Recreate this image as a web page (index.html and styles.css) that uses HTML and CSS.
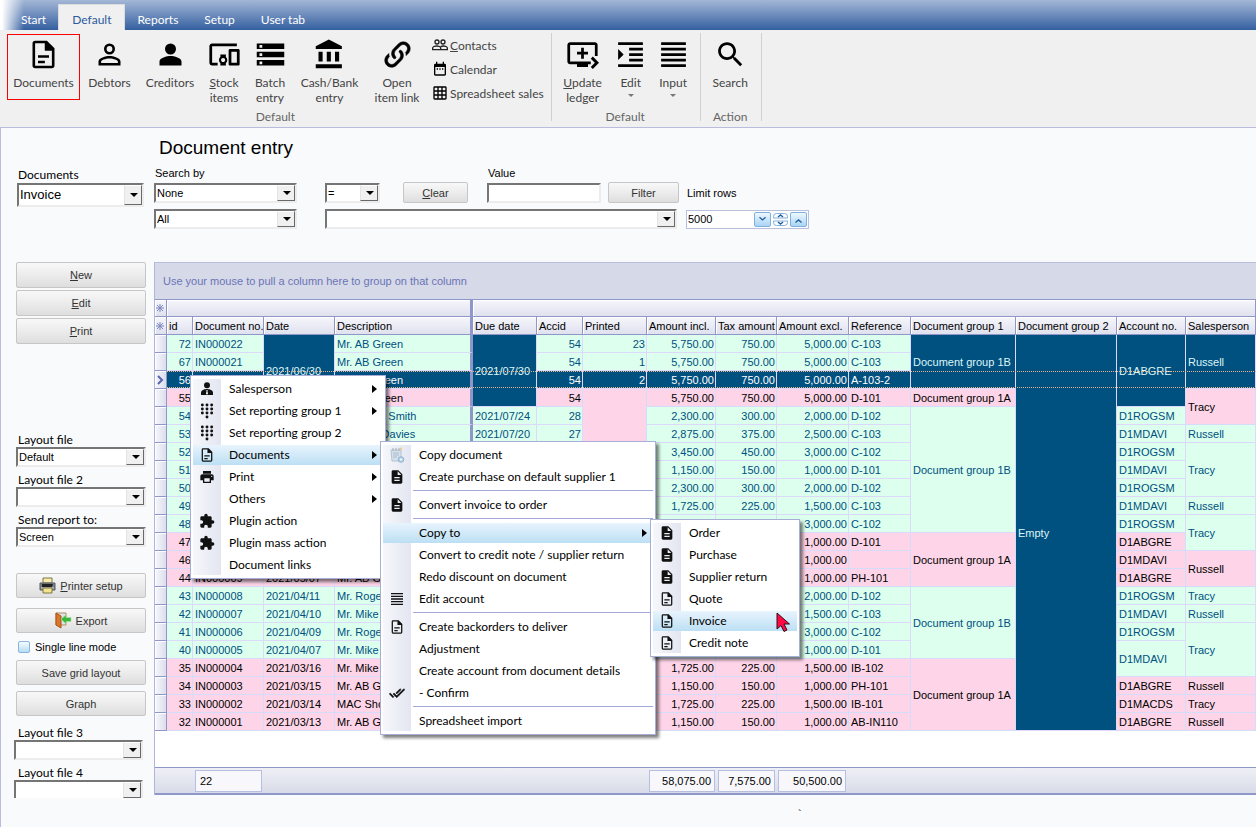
FILE: index.html
```html
<!DOCTYPE html>
<html lang="en">
<head>
<meta charset="utf-8">
<title>Document entry</title>
<link rel="stylesheet" href="styles.css">
</head>
<body>
<svg class="sprite" aria-hidden="true">
  <symbol id="doc" viewBox="0 0 24 24"><path fill-rule="evenodd" d="M14.500 2H6a2 2 0 0 0-2 2v16a2 2 0 0 0 2 2h12a2 2 0 0 0 2-2V7.500zM5.900 20.100V3.900H13V9h5.100v11.100zM8 12.500h8v1.800H8zM8 16.500h5v1.800H8z"/><path d="M13 2.500V9h6z"/></symbol>
  <symbol id="docfill" viewBox="0 0 24 24"><path fill-rule="evenodd" d="M14 2H6c-1.100 0-2 .9-2 2v16c0 1.100.9 2 2 2h12c1.100 0 2-.9 2-2V8zm2 16H8v-2h8zm0-4H8v-2h8zm-3-5V3.500L18.500 9z"/></symbol>
  <symbol id="person-o" viewBox="0 0 24 24"><path fill-rule="evenodd" d="M12 4a4 4 0 1 0 0 8 4 4 0 0 0 0-8zm0 1.900a2.100 2.100 0 1 1 0 4.200 2.100 2.100 0 0 1 0-4.200zM12 13c-2.670 0-8 1.340-8 4v3h16v-3c0-2.660-5.330-4-8-4zm0 1.900c2.970 0 6.100 1.460 6.100 2.100v1.100H5.900V17c0-.640 3.130-2.100 6.100-2.100z"/></symbol>
  <symbol id="person" viewBox="0 0 24 24"><path d="M12 12a4 4 0 1 0 0-8 4 4 0 0 0 0 8zm0 1c-2.670 0-8 1.340-8 4v3h16v-3c0-2.660-5.330-4-8-4z"/></symbol>
  <symbol id="devices" viewBox="0 0 24 24"><path d="M3 6h18V4H3c-1.100 0-2 .9-2 2v12c0 1.100.9 2 2 2h4v-2H3V6zm10 6H9v1.780c-.61.55-1 1.330-1 2.220s.39 1.670 1 2.220V20h4v-1.780c.61-.55 1-1.340 1-2.220s-.39-1.670-1-2.220V12zm-2 5.500c-.83 0-1.500-.67-1.500-1.500s.67-1.500 1.500-1.500 1.500.67 1.500 1.500-.67 1.500-1.500 1.500zM22 8h-6c-.5 0-1 .5-1 1v10c0 .5.5 1 1 1h6c.5 0 1-.5 1-1V9c0-.5-.5-1-1-1zm-1 10h-4v-8h4v8z"/></symbol>
  <symbol id="storage" viewBox="0 0 24 24"><path d="M2 20h20v-4H2v4zm2-3h2v2H4v-2zM2 4v4h20V4H2zm4 3H4V5h2v2zm-4 7h20v-4H2v4zm2-3h2v2H4v-2z"/></symbol>
  <symbol id="bank" viewBox="0 0 24 24"><path d="M4 10v7h3v-7H4zm6 0v7h3v-7h-3zM2 22h19v-3H2v3zm14-12v7h3v-7h-3zm-4.500-9L2 6v2h19V6l-9.500-5z"/></symbol>
  <symbol id="link" viewBox="0 0 24 24"><path d="M10.590 13.410C11 13.800 11 14.440 10.590 14.830 10.200 15.220 9.560 15.220 9.170 14.830 7.220 12.880 7.220 9.710 9.170 7.760L12.710 4.220C14.660 2.270 17.830 2.270 19.780 4.220 21.730 6.170 21.730 9.340 19.780 11.290L18.290 12.780C18.300 11.960 18.170 11.140 17.890 10.360L18.360 9.880C19.540 8.710 19.540 6.810 18.360 5.640 17.190 4.460 15.290 4.460 14.120 5.640L10.590 9.170C9.410 10.340 9.410 12.240 10.590 13.410M13.410 9.170C13.800 8.780 14.440 8.780 14.830 9.170 16.780 11.120 16.780 14.290 14.830 16.240L11.290 19.780C9.340 21.730 6.170 21.730 4.220 19.780 2.270 17.830 2.270 14.660 4.220 12.710L5.710 11.220C5.700 12.040 5.830 12.860 6.110 13.650L5.640 14.120C4.460 15.290 4.460 17.190 5.640 18.360 6.810 19.540 8.710 19.540 9.880 18.360L13.410 14.830C14.590 13.660 14.590 11.760 13.410 10.590 13 10.200 13 9.560 13.410 9.170Z" stroke="#000" stroke-width=".4"/></symbol>
  <symbol id="people" viewBox="0 0 24 24"><g fill="none" stroke="#222" stroke-width="2"><circle cx="7.500" cy="7.500" r="3"/><circle cx="16.500" cy="7.500" r="3"/><path d="M1 19v-2.500c0-1.500 3-3 6-3s6 1.500 6 3V19zM13 19h10v-2.500c0-1.500-3-3-6-3-1.500 0-3 .4-4 1"/></g></symbol>
  <symbol id="calendar" viewBox="0 0 24 24"><path fill-rule="evenodd" d="M19 4h-1V1h-2v3H8V1H6v3H5a2 2 0 0 0-2 2v14a2 2 0 0 0 2 2h14a2 2 0 0 0 2-2V6a2 2 0 0 0-2-2zm0 16H5V9h14zM7 11h2v2H7zm4 0h2v2h-2zm4 0h2v2h-2z"/></symbol>
  <symbol id="grid" viewBox="0 0 24 24"><path d="M20 2H4c-1.100 0-2 .9-2 2v16c0 1.100.9 2 2 2h16c1.100 0 2-.9 2-2V4c0-1.100-.9-2-2-2zM8 20H4v-4h4v4zm0-6H4v-4h4v4zm0-6H4V4h4v4zm6 12h-4v-4h4v4zm0-6h-4v-4h4v4zm0-6h-4V4h4v4zm6 12h-4v-4h4v4zm0-6h-4v-4h4v4zm0-6h-4V4h4v4z"/></symbol>
  <symbol id="ledger" viewBox="0 0 24 24"><path d="M21 3H3c-1.110 0-2 .89-2 2v12c0 1.100.89 2 2 2h5v2h8v-2h2v-2H3V5h18v8h2V5c0-1.110-.9-2-2-2zm-8 7V7h-2v3H8v2h3v3h2v-3h3v-2h-3zm11 8l-4.500 4.500L18 21l3-3-3-3 1.500-1.500L24 18z"/></symbol>
  <symbol id="indent" viewBox="0 0 24 24"><path d="M3 21h18v-2H3v2zM3 8v8l4-4-4-4zm8 9h10v-2H11v2zM3 3v2h18V3H3zm8 6h10V7H11v2zm0 4h10v-2H11v2z"/></symbol>
  <symbol id="lines" viewBox="0 0 24 24"><path d="M3 21h18v-2H3v2zm0-4h18v-2H3v2zm0-4h18v-2H3v2zm0-4h18V7H3v2zm0-6v2h18V3H3z"/></symbol>
  <symbol id="search" viewBox="0 0 24 24"><path d="M15.500 14h-.79l-.28-.27C15.410 12.590 16 11.110 16 9.500 16 5.910 13.090 3 9.500 3S3 5.910 3 9.500 5.910 16 9.500 16c1.610 0 3.090-.59 4.230-1.570l.27.28v.79l5 4.990L20.490 19l-4.990-5zm-6 0C7.010 14 5 11.990 5 9.500S7.010 5 9.500 5 14 7.010 14 9.500 11.990 14 9.500 14z"/></symbol>
  <symbol id="tie" viewBox="0 0 24 24"><circle cx="12" cy="6.500" r="4.500"/><path fill-rule="evenodd" d="M12 12c-2 0-9 1-9 5.500V21h18v-3.500C21 13 14 12 12 12zm-1.300 1.500h2.600l-.7 1.500 1 4-1.600 1.500-1.600-1.500 1-4z"/></symbol>
  <symbol id="dial" viewBox="0 0 24 24"><circle cx="5" cy="3" r="2.200"/><circle cx="12" cy="3" r="2.200"/><circle cx="19" cy="3" r="2.200"/><circle cx="5" cy="9" r="2.200"/><circle cx="12" cy="9" r="2.200"/><circle cx="19" cy="9" r="2.200"/><circle cx="5" cy="15" r="2.200"/><circle cx="12" cy="15" r="2.200"/><circle cx="19" cy="15" r="2.200"/><circle cx="12" cy="21" r="2.200"/></symbol>
  <symbol id="print" viewBox="0 0 24 24"><path d="M19 8H5c-1.660 0-3 1.340-3 3v6h4v4h12v-4h4v-6c0-1.660-1.340-3-3-3zm-3 11H8v-5h8v5zm3-7c-.55 0-1-.45-1-1s.45-1 1-1 1 .45 1 1-.45 1-1 1zm-1-9H6v4h12V3z"/></symbol>
  <symbol id="puzzle" viewBox="0 0 24 24"><path d="M20.500 11H19V7c0-1.100-.9-2-2-2h-4V3.500C13 2.120 11.880 1 10.500 1S8 2.120 8 3.500V5H4c-1.100 0-1.990.9-1.990 2v3.800H3.500c1.490 0 2.700 1.210 2.700 2.700s-1.210 2.700-2.700 2.700H2V20c0 1.100.9 2 2 2h3.800v-1.500c0-1.490 1.210-2.700 2.700-2.700 1.490 0 2.700 1.210 2.700 2.700V22H17c1.100 0 2-.9 2-2v-4h1.500c1.380 0 2.500-1.120 2.500-2.500S21.880 11 20.500 11z"/></symbol>
  <symbol id="doneall" viewBox="0 0 24 24"><path d="M18 7l-1.410-1.410-6.340 6.340 1.410 1.410L18 7zm4.240-1.410L11.660 16.170 7.480 12l-1.410 1.410L11.660 19l12-12-1.420-1.410zM.41 13.410L6 19l1.410-1.410L1.830 12 .41 13.410z" stroke="#000" stroke-width=".8"/></symbol>
  <symbol id="copydoc" viewBox="0 0 16 16"><path d="M2 3h10v11H3z" fill="#d5e2ec" stroke="#b3c3d0"/><path d="M4 1v3M7 1v3M10 1v3" stroke="#a3afbb"/><path d="M4 6h6M4 8h6M4 10h4" stroke="#a9bccb"/><path d="M10 1l3-.5v3z" fill="#eec98c"/><circle cx="12" cy="12.500" r="2.800" fill="#b4cfe8" stroke="#94b3d2"/><circle cx="12" cy="12.500" r="1" fill="#fff"/></symbol>
</svg>

<nav class="tabs">
  <a href="#start">Start</a><a href="#default" class="on">Default</a><a href="#reports">Reports</a><a href="#setup">Setup</a><a href="#user">User tab</a>
</nav>

<div class="ribbon">
  <section class="group wide">
    <div class="tools">
      <button class="tool on w73"><svg><use href="#doc"/></svg>Documents</button>
      <button class="tool w59"><svg><use href="#person-o"/></svg>Debtors</button>
      <button class="tool w62"><svg><use href="#person"/></svg>Creditors</button>
      <button class="tool w46"><svg><use href="#devices"/></svg><span><u>S</u>tock<br>items</span></button>
      <button class="tool w46"><svg><use href="#storage"/></svg>Batch<br>entry</button>
      <button class="tool w73"><svg><use href="#bank"/></svg>Cash/Bank<br>entry</button>
      <button class="tool w62"><svg><use href="#link"/></svg>Open<br>item link</button>
      <div class="minis">
        <button class="mini"><svg><use href="#people"/></svg><span><u>C</u>ontacts</span></button>
        <button class="mini"><svg><use href="#calendar"/></svg>Calendar</button>
        <button class="mini"><svg><use href="#grid"/></svg>Spreadsheet sales</button>
      </div>
    </div>
    <h2>Default</h2>
  </section>
  <section class="group">
    <div class="tools">
      <button class="tool w62"><svg><use href="#ledger"/></svg><span><u>U</u>pdate<br>ledger</span></button>
      <button class="tool w34"><svg><use href="#indent"/></svg>Edit<i class="drop"></i></button>
      <button class="tool w51"><svg><use href="#lines"/></svg>Input<i class="drop"></i></button>
    </div>
    <h2>Default</h2>
  </section>
  <section class="group">
    <div class="tools"><button class="tool w59"><svg><use href="#search"/></svg>Search</button></div>
    <h2>Action</h2>
  </section>
</div>

<div class="work">
  <aside class="side">
    <div class="field top"><label for="f-doc">Documents</label><span class="combo big"><select id="f-doc"><option>Invoice</option></select></span></div>
    <div class="stack">
      <button class="btn"><span><u>N</u>ew</span></button>
      <button class="btn"><span><u>E</u>dit</span></button>
      <button class="btn"><span><u>P</u>rint</span></button>
    </div>
    <div class="fields">
      <div class="field"><label for="f-l1">Layout file</label><span class="combo"><select id="f-l1"><option>Default</option></select></span></div>
      <div class="field"><label for="f-l2">Layout file 2</label><span class="combo"><select id="f-l2"><option></option></select></span></div>
      <div class="field"><label for="f-send">Send report to:</label><span class="combo"><select id="f-send"><option>Screen</option></select></span></div>
    </div>
    <div class="actions">
      <button class="btn"><svg class="pic" viewBox="0 0 17 17"><path d="M4 1h9v5H4z" fill="#f6ecae" stroke="#7d7646"/><path d="M1 6h15v7H1z" fill="#7d828a" stroke="#565a61"/><path d="M3 7h11l-1 3H3z" fill="#222"/><path d="M2 11h13" stroke="#d5d8dc"/><path d="M4 11h9v5H4z" fill="#f3e48e" stroke="#7d7646"/></svg><span><u>P</u>rinter setup</span></button>
      <button class="btn"><svg class="pic" viewBox="0 0 17 17"><path d="M1 1h10v12H1z" fill="#dfe3e8" stroke="#b48a5c"/><path d="M1 1l5 3v12l-5-3z" fill="#d9772b" stroke="#a65516"/><path d="M6 7l5-4v2.500h5v4h-5V12z" fill="#39b83b" stroke="#a5e29d" stroke-width=".6"/></svg>Export</button>
      <label class="check"><input type="checkbox">Single line mode</label>
      <button class="btn">Save grid layout</button>
      <button class="btn">Graph</button>
    </div>
    <div class="fields late">
      <div class="field"><label for="f-l3">Layout file 3</label><span class="combo"><select id="f-l3"><option></option></select></span></div>
      <div class="field cut"><label for="f-l4">Layout file 4</label><span class="combo"><select id="f-l4"><option></option></select></span></div>
    </div>
  </aside>

  <main class="main">
    <h1>Document entry</h1>
    <form class="filter">
      <label for="f-by" class="c1">Search by</label>
      <label for="f-val" class="c4">Value</label>
      <span class="combo w143 c1 r2"><select id="f-by"><option>None</option></select></span>
      <span class="combo w55 c2 r2"><select id="f-op" aria-label="Operator"><option>=</option></select></span>
      <button type="button" class="btn w65 c3 r2"><span><u>C</u>lear</span></button>
      <input id="f-val" class="box w114 c4 r2" type="text">
      <button type="button" class="btn w71 c5 r2">Filter</button>
      <label for="f-rows" class="c6 r2">Limit rows</label>
      <span class="combo w143 c1 r3"><select id="f-all" aria-label="Scope"><option>All</option></select></span>
      <span class="combo w352 r3 cw"><select id="f-expr" aria-label="Saved filter"><option></option></select></span>
      <span class="spin c6 r3">
        <input id="f-rows" type="text" value="5000">
        <button type="button" aria-label="Less"><svg viewBox="0 0 17 15"><path d="M5 5l3.500 3L12 5"/></svg></button>
        <button type="button" class="pair" aria-label="Step"><svg viewBox="0 0 17 15"><path d="M1.500 6V4.500q0-3 3-3h8q3 0 3 3V6zM1.500 9v1.500q0 3 3 3h8q3 0 3-3V9z" class="ring"/><path d="M6 5l2.500-2L11 5M6 10l2.500 2 2.500-2"/></svg></button>
        <button type="button" aria-label="More"><svg viewBox="0 0 17 15"><path d="M5 11l3.500-3 3.500 3"/></svg></button>
      </span>
    </form>

    <div class="panel">
      <div class="groupbar">Use your mouse to pull a column here to group on that column</div>
      <table>
        <colgroup><col class="k12"><col class="k26"><col class="k71"><col class="k71"><col class="k138"><col class="k64"><col class="k46"><col class="k64"><col class="k69"><col class="k61"><col class="k72"><col class="k62"><col class="k105"><col class="k101"><col class="k69"><col></colgroup>
        <thead>
          <tr><th class="ind"><svg viewBox="0 0 10 10"><path d="M5 1v8M1 5h8M2 2l6 6M8 2l-6 6"/></svg></th><th colspan="4" class="split"></th><th colspan="11"></th></tr>
          <tr><th class="ind"><svg viewBox="0 0 10 10"><path d="M5 1v8M1 5h8M2 2l6 6M8 2l-6 6"/></svg></th><th>id</th><th>Document no.</th><th>Date</th><th class="split">Description</th><th>Due date</th><th>Accid</th><th>Printed</th><th>Amount incl.</th><th>Tax amount</th><th>Amount excl.</th><th>Reference</th><th>Document group 1</th><th>Document group 2</th><th>Account no.</th><th>Salesperson</th></tr>
        </thead>
        <tbody>
          <tr class="g"><td class="ind"></td><td class="n">72</td><td>IN000022</td><td rowspan="4" class="d">2021/06/30</td><td class="split">Mr. AB Green</td><td rowspan="4" class="d">2021/07/30</td><td class="n">54</td><td class="n">23</td><td class="n">5,750.00</td><td class="n">750.00</td><td class="n">5,000.00</td><td>C-103</td><td rowspan="3" class="d">Document group 1B</td><td rowspan="22" class="d">Empty</td><td rowspan="4" class="d">D1ABGRE</td><td rowspan="3" class="d">Russell</td></tr>
          <tr class="g"><td class="ind"></td><td class="n">67</td><td>IN000021</td><td class="split">Mr. AB Green</td><td class="n">54</td><td class="n">1</td><td class="n">5,750.00</td><td class="n">750.00</td><td class="n">5,000.00</td><td>C-103</td></tr>
          <tr class="d focus"><td class="ind"><svg viewBox="0 0 10 16"><path d="M3 4l4 4-4 4"/></svg></td><td class="n">56</td><td></td><td class="split">Mr. AB Green</td><td class="n">54</td><td class="n">2</td><td class="n">5,750.00</td><td class="n">750.00</td><td class="n">5,000.00</td><td>A-103-2</td></tr>
          <tr class="p"><td class="ind"></td><td class="n">55</td><td></td><td class="split">Mr. AB Green</td><td class="n">54</td><td rowspan="19"></td><td class="n">5,750.00</td><td class="n">750.00</td><td class="n">5,000.00</td><td>D-101</td><td>Document group 1A</td><td rowspan="2">Tracy</td></tr>
          <tr class="g"><td class="ind"></td><td class="n">54</td><td></td><td></td><td class="split">Mr. Roger Smith</td><td>2021/07/24</td><td class="n">28</td><td class="n">2,300.00</td><td class="n">300.00</td><td class="n">2,000.00</td><td>D-102</td><td rowspan="7">Document group 1B</td><td>D1ROGSM</td></tr>
          <tr class="g"><td class="ind"></td><td class="n">53</td><td></td><td></td><td class="split">Mr. Mike Davies</td><td>2021/07/20</td><td class="n">27</td><td class="n">2,875.00</td><td class="n">375.00</td><td class="n">2,500.00</td><td>C-103</td><td>D1MDAVI</td><td>Russell</td></tr>
          <tr class="g"><td class="ind"></td><td class="n">52</td><td></td><td></td><td class="split"></td><td></td><td></td><td class="n">3,450.00</td><td class="n">450.00</td><td class="n">3,000.00</td><td>C-102</td><td>D1ROGSM</td><td rowspan="3">Tracy</td></tr>
          <tr class="g"><td class="ind"></td><td class="n">51</td><td></td><td></td><td class="split"></td><td></td><td></td><td class="n">1,150.00</td><td class="n">150.00</td><td class="n">1,000.00</td><td>D-101</td><td>D1MDAVI</td></tr>
          <tr class="g"><td class="ind"></td><td class="n">50</td><td></td><td></td><td class="split"></td><td></td><td></td><td class="n">2,300.00</td><td class="n">300.00</td><td class="n">2,000.00</td><td>D-102</td><td>D1ROGSM</td></tr>
          <tr class="g"><td class="ind"></td><td class="n">49</td><td></td><td></td><td class="split"></td><td></td><td></td><td class="n">1,725.00</td><td class="n">225.00</td><td class="n">1,500.00</td><td>C-103</td><td>D1MDAVI</td><td>Russell</td></tr>
          <tr class="g"><td class="ind"></td><td class="n">48</td><td></td><td></td><td class="split"></td><td></td><td></td><td></td><td></td><td class="n">3,000.00</td><td>C-102</td><td>D1ROGSM</td><td rowspan="2">Tracy</td></tr>
          <tr class="p"><td class="ind"></td><td class="n">47</td><td></td><td></td><td class="split"></td><td></td><td></td><td></td><td></td><td class="n">1,000.00</td><td>D-101</td><td rowspan="3">Document group 1A</td><td>D1ABGRE</td></tr>
          <tr class="p"><td class="ind"></td><td class="n">46</td><td></td><td></td><td class="split"></td><td></td><td></td><td></td><td></td><td class="n">1,000.00</td><td></td><td>D1MDAVI</td><td rowspan="2">Russell</td></tr>
          <tr class="p"><td class="ind"></td><td class="n">44</td><td>IN000009</td><td>2021/05/07</td><td class="split">Mr. AB Green</td><td></td><td></td><td></td><td></td><td class="n">1,000.00</td><td>PH-101</td><td>D1ABGRE</td></tr>
          <tr class="g"><td class="ind"></td><td class="n">43</td><td>IN000008</td><td>2021/04/11</td><td class="split">Mr. Roger Smith</td><td></td><td></td><td></td><td></td><td class="n">2,000.00</td><td>D-102</td><td rowspan="4">Document group 1B</td><td>D1ROGSM</td><td>Tracy</td></tr>
          <tr class="g"><td class="ind"></td><td class="n">42</td><td>IN000007</td><td>2021/04/10</td><td class="split">Mr. Mike Davies</td><td></td><td></td><td></td><td></td><td class="n">1,500.00</td><td>C-103</td><td>D1MDAVI</td><td>Russell</td></tr>
          <tr class="g"><td class="ind"></td><td class="n">41</td><td>IN000006</td><td>2021/04/09</td><td class="split">Mr. Roger Smith</td><td></td><td></td><td></td><td></td><td class="n">3,000.00</td><td>C-102</td><td>D1ROGSM</td><td rowspan="3">Tracy</td></tr>
          <tr class="g"><td class="ind"></td><td class="n">40</td><td>IN000005</td><td>2021/04/07</td><td class="split">Mr. Mike Davies</td><td></td><td></td><td></td><td></td><td class="n">1,000.00</td><td>D-101</td><td rowspan="2">D1MDAVI</td></tr>
          <tr class="p"><td class="ind"></td><td class="n">35</td><td>IN000004</td><td>2021/03/16</td><td class="split">Mr. Mike Davies</td><td></td><td></td><td class="n">1,725.00</td><td class="n">225.00</td><td class="n">1,500.00</td><td>IB-102</td><td rowspan="4">Document group 1A</td></tr>
          <tr class="p"><td class="ind"></td><td class="n">34</td><td>IN000003</td><td>2021/03/15</td><td class="split">Mr. AB Green</td><td></td><td></td><td class="n">1,150.00</td><td class="n">150.00</td><td class="n">1,000.00</td><td>PH-101</td><td>D1ABGRE</td><td>Russell</td></tr>
          <tr class="p"><td class="ind"></td><td class="n">33</td><td>IN000002</td><td>2021/03/14</td><td class="split">MAC Shop</td><td></td><td></td><td class="n">1,725.00</td><td class="n">225.00</td><td class="n">1,500.00</td><td>IB-101</td><td>D1MACDS</td><td>Tracy</td></tr>
          <tr class="p"><td class="ind"></td><td class="n">32</td><td>IN000001</td><td>2021/03/13</td><td class="split">Mr. AB Green</td><td></td><td></td><td class="n">1,150.00</td><td class="n">150.00</td><td class="n">1,000.00</td><td>AB-IN110</td><td>D1ABGRE</td><td>Russell</td></tr>
        </tbody>
      </table>
      <div class="totals">
        <output class="count">22</output>
        <output class="t66">58,075.00</output>
        <output class="t57">7,575.00</output>
        <output class="t68">50,500.00</output>
      </div>
    </div>
    <p class="status">`</p>
  </main>
</div>

<ul class="menu root">
  <li><svg><use href="#tie"/></svg>Salesperson<i></i></li>
  <li><svg><use href="#dial"/></svg>Set reporting group 1<i></i></li>
  <li><svg><use href="#dial"/></svg>Set reporting group 2</li>
  <li class="on"><svg><use href="#doc"/></svg>Documents<i></i>
    <ul class="menu second">
      <li><svg><use href="#copydoc"/></svg>Copy document</li>
      <li><svg><use href="#docfill"/></svg>Create purchase on default supplier 1</li>
      <li class="sep"><svg><use href="#docfill"/></svg>Convert invoice to order</li>
      <li class="sep on">Copy to<i></i>
        <ul class="menu third">
          <li><svg><use href="#docfill"/></svg>Order</li>
          <li><svg><use href="#docfill"/></svg>Purchase</li>
          <li><svg><use href="#docfill"/></svg>Supplier return</li>
          <li><svg><use href="#doc"/></svg>Quote</li>
          <li class="on"><svg><use href="#doc"/></svg>Invoice<svg class="pointer" viewBox="0 0 14 20"><path d="M1 1v16l4-3.500 3 6 3-1.500-3-6h5.500z" fill="#ff0a45" stroke="#2b1018"/></svg></li>
          <li><svg><use href="#doc"/></svg>Credit note</li>
        </ul>
      </li>
      <li>Convert to credit note / supplier return</li>
      <li>Redo discount on document</li>
      <li><svg><use href="#lines"/></svg>Edit account</li>
      <li class="sep"><svg><use href="#doc"/></svg>Create backorders to deliver</li>
      <li>Adjustment</li>
      <li>Create account from document details</li>
      <li><svg><use href="#doneall"/></svg>- Confirm</li>
      <li class="sep">Spreadsheet import</li>
    </ul>
  </li>
  <li><svg><use href="#print"/></svg>Print<i></i></li>
  <li>Others<i></i></li>
  <li><svg><use href="#puzzle"/></svg>Plugin action</li>
  <li><svg><use href="#puzzle"/></svg>Plugin mass action</li>
  <li>Document links</li>
</ul>
</body>
</html>
```
FILE: styles.css
```css
* { box-sizing: border-box; }
body {
  margin: 0;
  min-height: 100vh;
  display: flex;
  flex-direction: column;
  overflow: hidden;
  background: #f9fafc;
  color: #000;
  font: 11px/14px "Liberation Sans", Arial, sans-serif;
}
button, input, select { font: inherit; color: inherit; margin: 0; }
h1, h2, p, ul { margin: 0; padding: 0; }
.sprite { position: absolute; width: 0; height: 0; }

/* Tab strip */
.tabs {
  display: flex;
  align-items: flex-end;
  height: 30px;
  padding-left: 8px;
  background: linear-gradient(90deg, #fff 2px, rgba(255, 255, 255, 0) 24px), linear-gradient(#a3b7d6, #6d8cbc 50%, #335f9f);
  font: 12px/16px Lato, "Open Sans", sans-serif;
}
.tabs a { padding: 7px 13px 2px; color: #fff; text-decoration: none; }
.tabs a.on { background: #f0f0f0; color: #2d5a9c; box-shadow: 0 0 0 1px #dcdcdc; }

/* Ribbon */
.ribbon {
  display: flex;
  position: relative;
  background: #f0f0f0;
  border-bottom: 1px solid #b9bcdc;
  padding-top: 3px;
  height: 98px;
  color: #444;
  font: 12px/15px Lato, "Open Sans", sans-serif;
}
.group { display: flex; flex-direction: column; height: 88px; padding: 1px 1px 0 0; border-right: 1px solid #d0d0d0; }
.group.wide { padding-left: 7px; padding-right: 7px; }
.group h2 { margin-top: auto; margin-bottom: -3px; color: #666; font: inherit; text-align: center; }
.tools { display: flex; align-items: flex-start; }
.tool {
  display: flex;
  flex-direction: column;
  align-items: center;
  height: 66px;
  padding: 3px 0 0;
  border: 1px solid transparent;
  background: none;
  text-align: center;
  white-space: nowrap;
}
.tool.on { border-color: #f00; }
.tool svg { width: 33px; height: 33px; margin-bottom: 4px; flex: none; fill: #000; }
.w34 { width: 34px; } .w46 { width: 46px; } .w51 { width: 51px; } .w59 { width: 59px; } .w62 { width: 62px; } .w73 { width: 73px; }
.drop { margin-top: 4px; border: 3px solid transparent; border-top-color: #777; border-bottom: 0; }
.minis { display: flex; flex-direction: column; }
.mini { display: flex; align-items: center; gap: 2px; height: 24px; padding: 0 0 2px 4px; border: 0; background: none; white-space: nowrap; }
.mini svg { width: 16px; height: 16px; fill: #000; }

/* Work area */
.work { display: flex; flex: 1; border-left: 1px solid #b9bcdc; }
.side { flex: none; width: 153px; padding: 40px 8px 0 15px; }
.side label { display: block; font: 12px/14px Lato, "Open Sans", sans-serif; padding-left: 2px; }
.combo {
  display: flex;
  position: relative;
  height: 20px;
  border: 2px solid;
  border-color: #757575 #ececec #ececec #757575;
  background: #fff;
}
.combo.big { height: 24px; font-size: 13px; }
.combo select { flex: 1; width: 100%; padding: 0 20px 0 1px; border: 0; background: none; appearance: none; outline: 0; }
.combo::before {
  content: "";
  position: absolute;
  top: 0; right: 0; bottom: 0;
  width: 16px;
  background: #f0f0f0;
  border: 1px solid;
  border-color: #fff #696969 #696969 #e3e3e3;
  pointer-events: none;
}
.combo::after {
  content: "";
  position: absolute;
  top: 50%; right: 4px;
  margin-top: -2px;
  border: 4px solid transparent;
  border-top-color: #000;
  border-bottom: 0;
  pointer-events: none;
}
.btn {
  display: flex;
  align-items: center;
  justify-content: center;
  gap: 4px;
  height: 25px;
  padding: 0;
  border: 1px solid #c6c6c6;
  border-radius: 2px;
  background: linear-gradient(#f8f8f8, #ececec 50%, #dedede);
  color: #333;
}
.side .btn { width: 100%; }
.pic { width: 17px; height: 17px; }
.top { padding: 0 2px 0 1px; }
.top label { padding-left: 1px; margin-bottom: 1px; }
.stack { display: flex; flex-direction: column; gap: 2px; margin-top: 55px; }
.stack .btn { height: 26px; }
.fields { display: flex; flex-direction: column; gap: 6px; margin-top: 89px; }
.fields.late { margin: 10px 3px 0 -2px; }
.late label { padding-left: 4px; }
.actions { display: flex; flex-direction: column; gap: 6px; margin-top: 26px; }
.actions .btn:nth-child(2) { margin-top: 4px; }
.side .check { display: flex; align-items: center; gap: 5px; height: 15px; font: 11px/14px "Liberation Sans", Arial, sans-serif; }
.check input { appearance: none; width: 12px; height: 12px; border: 1px solid #8bb3dc; border-radius: 2px; background: linear-gradient(#f4fbff, #b6dcf6); }
.cut { height: 32px; overflow: hidden; }

.main { flex: 1; min-width: 0; display: flex; flex-direction: column; }
h1 { padding: 9px 0 0 5px; font-size: 19px; font-weight: 400; line-height: 22px; }
.filter {
  display: grid;
  grid-template-columns: 171px 78px 84px 121px 78px 123px;
  grid-template-rows: 16px 21px 4px 20px;
  row-gap: 1px;
  align-items: center;
  align-content: start;
  height: 103px;
  padding-top: 6px;
}
.filter label { padding-left: 1px; }
.filter .btn { height: 21px; }
.r2 { grid-row: 2; } .r3 { grid-row: 4; }
.c1 { grid-column: 1; } .c2 { grid-column: 2; } .c3 { grid-column: 3; } .c4 { grid-column: 4; } .c5 { grid-column: 5; } .c6 { grid-column: 6; }
.cw { grid-column: 2 / 6; }
.w143 { width: 143px; } .w55 { width: 55px; } .w65 { width: 65px; } .w114 { width: 114px; } .w71 { width: 71px; } .w352 { width: 352px; }
.box { height: 20px; border: 2px solid; border-color: #757575 #ececec #ececec #757575; background: #fff; outline: 0; }
.spin { display: flex; align-items: center; gap: 1px; height: 19px; padding-right: 1px; border: 1px solid #b9c0dc; background: #fff; }
.spin input { flex: 1; min-width: 0; padding: 0 0 0 1px; border: 0; background: none; outline: 0; }
.spin button { width: 17px; height: 15px; padding: 0; border: 1px solid #7fb0df; border-radius: 2px; background: linear-gradient(#eef8ff, #a9d4f4); }
.spin button.pair { border: 0; background: none; }
.spin svg { display: block; width: 100%; height: 100%; fill: none; stroke: #1f5f9f; stroke-width: 1.500; }
.spin .ring { stroke: #7fb0df; stroke-width: 1; }

/* Document grid */
.panel { border-left: 1px solid #b0b5da; background: #fff; }
.groupbar { height: 37px; padding: 11px 0 0 8px; border-top: 1px solid #b9bedd; background: #d6d9e8; color: #6b74b6; }
table { width: 100%; table-layout: fixed; border-collapse: separate; border-spacing: 0; }
.k12 { width: 12px; } .k26 { width: 26px; } .k46 { width: 46px; } .k61 { width: 61px; } .k62 { width: 62px; } .k64 { width: 64px; } .k69 { width: 69px; } .k71 { width: 71px; } .k72 { width: 72px; } .k101 { width: 101px; } .k105 { width: 105px; } .k138 { width: 138px; }
th, td { height: 18px; padding: 0 1px 0 2px; line-height: 14px; text-align: left; font-weight: 400; white-space: nowrap; overflow: hidden; vertical-align: middle; }
th { border-right: 1px solid #8f97c8; border-bottom: 1px solid #8f97c8; background: linear-gradient(#f6f6fb, #dfe1ee); box-shadow: inset 1px 1px #fff; }
thead tr:first-child th { border-top: 1px solid #8f97c8; }
td { border-right: 1px solid #dcd9fa; border-bottom: 1px solid #dcd9fa; }
.n { text-align: right; }
.g td { background: #dcffee; color: #005080; }
.p td { background: #fed5e8; color: #000; border-color: #d5dcfa; }
tr.d td, td.d.d { background: #005080; color: #fff; }
.g td.d.d, .p td.d.d { background: #005080; color: #dff5f5; border-right-color: #dcd9fa; }
th.split, td.split.split { border-right: 3px solid #8f97c8; }
tbody td.ind.ind { padding: 0; border-color: #8f97c8; background: linear-gradient(90deg, #f7f7fc, #dcdeec); box-shadow: inset 1px 1px #fff; }
.ind svg { display: block; width: 10px; height: 16px; fill: none; stroke: #5a64ac; stroke-width: 2; }
th.ind { padding: 0; }
th.ind svg { height: 10px; stroke: #7d86c0; stroke-width: 1; }
.focus { position: relative; }
.focus td:last-child::after {
  content: "";
  position: absolute;
  inset: 0 0 1px 12px;
  border: 1px dotted #e8b48c;
  border-width: 1px 0;
  pointer-events: none;
}
.totals {
  display: flex;
  gap: 3px;
  align-items: center;
  height: 28px;
  margin-top: 36px;
  padding-left: 40px;
  border: 1px solid #8f97c8;
  border-width: 1px 0 2px;
  background: linear-gradient(#eff0f6, #d8dbe8);
}
.totals output { height: 22px; padding: 0 3px 0 4px; border: 1px solid #b6bfdf; background: #f8f8fc; line-height: 20px; text-align: right; }
.totals .count { width: 67px; margin-right: 384px; text-align: left; }
.t66 { width: 66px; } .t57 { width: 57px; } .t68 { width: 68px; }
.status { padding: 12px 0 0 644px; line-height: 14px; }

/* Context menus */
.menu {
  position: absolute;
  z-index: 2;
  padding: 3px 2px;
  border: 1px solid #a9aed6;
  background: #fff linear-gradient(90deg, #f6f7fb, #e3e6f1) no-repeat 2px 3px / 28px calc(100% - 6px);
  box-shadow: 3px 3px 3px rgba(0, 0, 0, .5);
  color: #000;
  font: 12px/20px Lato, "Open Sans", sans-serif;
  list-style: none;
}
.menu li { position: relative; height: 20px; margin-bottom: 2px; padding-left: 36px; white-space: nowrap; }
.menu li:last-child { margin-bottom: 0; }
.menu li.on { background: linear-gradient(#e8f4fd, #bcdff4); }
.menu li > svg:first-child { position: absolute; left: 6px; top: 2px; width: 16px; height: 16px; fill: #111; }
.menu li > i { position: absolute; right: 6px; top: 6px; border: 4px solid transparent; border-left: 5px solid #000; border-right: 0; }
.menu li.sep { margin-top: 8px; }
.menu li.sep::before { content: ""; position: absolute; left: 30px; right: 0; top: -5px; border-top: 1px solid #a3a9d8; }
.root { left: 190px; top: 375px; width: 196px; }
.second { left: calc(100% - 3px); top: -4px; width: 276px; }
.third { left: calc(100% - 3px); top: -4px; width: 150px; }
.pointer { position: absolute; right: 7px; top: 1px; width: 14px; height: 20px; }
```
